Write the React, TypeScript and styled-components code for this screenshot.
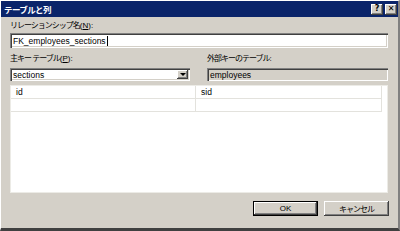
import styled, { createGlobalStyle } from "styled-components";

const GlobalStyle = createGlobalStyle`
  html, body {
    margin: 0;
    padding: 0;
    background: #d4d0c8;
  }
  body {
    font-family: "Liberation Sans", "Noto Sans CJK JP", sans-serif;
    font-size: 8.5px;
    color: #000;
  }
`;

const raised = `
  box-shadow: inset -1px -1px #404040, inset 1px 1px #ffffff,
    inset -2px -2px #808080, inset 2px 2px #d4d0c8;
`;

const sunken = `
  box-shadow: inset 1px 1px #808080, inset 2px 2px #404040,
    inset -1px -1px #ffffff, inset -2px -2px #d4d0c8;
`;

const Window = styled.div`
  width: 400px;
  height: 231px;
  box-sizing: border-box;
  display: flex;
  flex-direction: column;
  background: #d4d0c8;
  border-top: 1px solid #ffffff;
  border-left: 1px solid #ffffff;
  border-right: 2px solid #808080;
  border-bottom: 3px solid #404040;
`;

const TitleBar = styled.div`
  height: 16px;
  display: flex;
  align-items: center;
  justify-content: space-between;
  padding: 0 1px 0 3px;
  background: #0a246a;
`;

const Title = styled.span`
  color: #ffffff;
  font-weight: bold;
  font-size: 8.5px;
  letter-spacing: -0.6px;
`;

const CaptionButtons = styled.div`
  display: flex;
  gap: 2px;
`;

const CaptionButton = styled.div`
  width: 12px;
  height: 11px;
  display: flex;
  align-items: center;
  justify-content: center;
  background: #d4d0c8;
  ${raised}
  font-family: "DejaVu Sans", sans-serif;
  font-weight: bold;
  font-size: 8px;
  line-height: 1;
`;

const Content = styled.div`
  flex: 1;
  display: flex;
  flex-direction: column;
  padding: 4px 10px 0 9px;
`;

const Label = styled.div`
  height: 10px;
  line-height: 10px;
  font-size: 8px;
  white-space: nowrap;
`;

// Japanese glyphs in the original UI font are narrower than full width
const Jp = styled.span`
  letter-spacing: -1px;
`;

const Key = styled.span`
  text-decoration: underline;
`;

const TextField = styled.div<{ $disabled?: boolean }>`
  box-sizing: border-box;
  display: flex;
  align-items: center;
  padding-left: 3px;
  background: ${(p) => (p.$disabled ? "#d4d0c8" : "#ffffff")};
  ${sunken}
  white-space: nowrap;
`;

const NameField = styled(TextField)`
  height: 15px;
  margin-top: 2px;
`;

const Caret = styled.span`
  display: inline-block;
  width: 1px;
  height: 10px;
  margin-left: 1px;
  background: #000;
`;

const TablesRow = styled.div`
  display: grid;
  grid-template-columns: 180px 1fr;
  column-gap: 17px;
  margin-top: 6px;
`;

const Column = styled.div`
  display: flex;
  flex-direction: column;
  gap: 4px;
`;

const Combo = styled(TextField)`
  height: 13px;
  justify-content: space-between;
  padding-right: 2px;
`;

const SmallField = styled(TextField)`
  height: 13px;
`;

const DropButton = styled.div`
  width: 11px;
  height: 9px;
  display: flex;
  align-items: center;
  justify-content: center;
  background: #d4d0c8;
  ${raised}
`;

const Arrow = styled.span`
  width: 0;
  height: 0;
  border-left: 3px solid transparent;
  border-right: 3px solid transparent;
  border-top: 3px solid #000;
`;

const Grid = styled.div`
  height: 108px;
  margin-top: 4px;
  box-sizing: border-box;
  background: #ffffff;
  border: 1px solid #ecebe6;
  padding-right: 5px;
`;

const GridRow = styled.div`
  display: grid;
  grid-template-columns: 185px 1fr;
`;

const Cell = styled.div`
  height: 12px;
  line-height: 12px;
  padding-left: 5px;
  border-right: 1px solid #e3e2dd;
  border-bottom: 1px solid #e3e2dd;
`;

const ButtonRow = styled.div`
  display: flex;
  justify-content: flex-end;
  gap: 6px;
  margin-top: 8px;
  margin-right: -1px;
`;

const Button = styled.div<{ $default?: boolean }>`
  width: 65px;
  height: 15px;
  box-sizing: border-box;
  display: flex;
  align-items: center;
  justify-content: center;
  background: #d4d0c8;
  border: ${(p) => (p.$default ? "1px solid #000" : "none")};
  ${raised}
  font-size: 8px;
`;

const rows = [
  ["id", "sid"],
  ["", ""],
];

export default function App() {
  return (
    <>
      <GlobalStyle />
      <Window>
        <TitleBar>
          <Title>テーブルと列</Title>
          <CaptionButtons>
            <CaptionButton>?</CaptionButton>
            <CaptionButton>✕</CaptionButton>
          </CaptionButtons>
        </TitleBar>
        <Content>
          <Label>
            <Jp>リレーションシップ名</Jp>(<Key>N</Key>):
          </Label>
          <NameField>
            FK_employees_sections
            <Caret />
          </NameField>
          <TablesRow>
            <Column>
              <Label>
                <Jp>主キー テーブル</Jp>(<Key>P</Key>):
              </Label>
              <Combo>
                <span>sections</span>
                <DropButton>
                  <Arrow />
                </DropButton>
              </Combo>
            </Column>
            <Column>
              <Label>
                <Jp>外部キーのテーブル</Jp>:
              </Label>
              <SmallField $disabled>employees</SmallField>
            </Column>
          </TablesRow>
          <Grid>
            {rows.map((r, i) => (
              <GridRow key={i}>
                <Cell>{r[0]}</Cell>
                <Cell>{r[1]}</Cell>
              </GridRow>
            ))}
          </Grid>
          <ButtonRow>
            <Button $default>OK</Button>
            <Button>
              <Jp>キャンセル</Jp>
            </Button>
          </ButtonRow>
        </Content>
      </Window>
    </>
  );
}
